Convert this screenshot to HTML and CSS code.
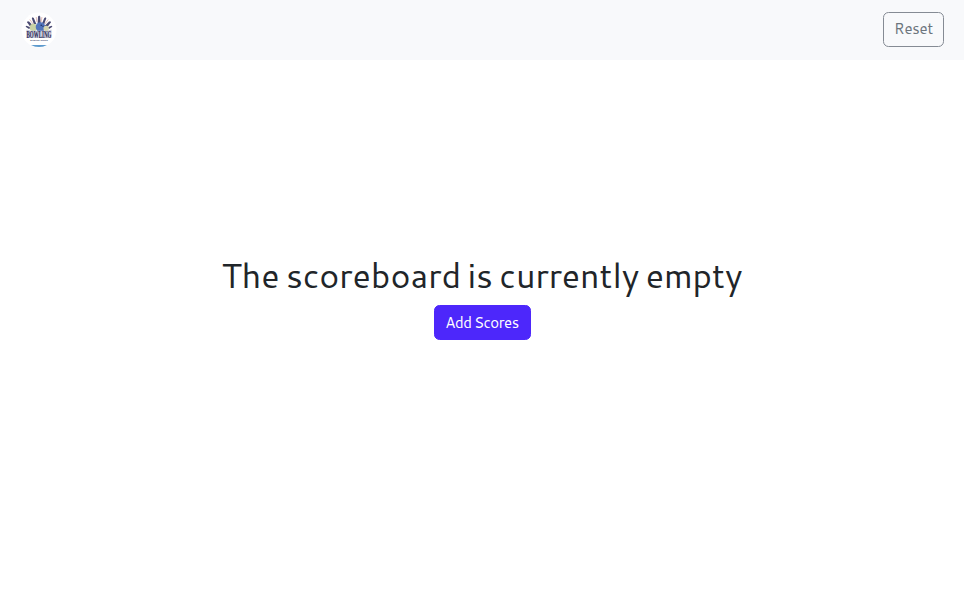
FILE: index.html
```
<!DOCTYPE html>
<html lang="en">
<head>
<meta charset="utf-8">
<title>Scoreboard</title>
<link rel="stylesheet" href="styles.css">
</head>
<body>
<header class="navbar">
  <svg class="logo" viewBox="0 0 36 36" role="img" aria-label="Bowling">
    <circle cx="18" cy="18" r="17.5" fill="#fff"/>
    <g fill="#4a4a72">
      <path d="M16.6 11 17 4.5 18.2 3.5 19.2 4.5 19.7 11z"/>
      <path d="M12.8 12 10.8 6.2 11.5 5.2 12.8 6 15.3 12z"/>
      <path d="M23.3 12 25.3 6.2 24.6 5.2 23.3 6 20.8 12z"/>
      <path d="M9.5 15 6.2 10.5 6.5 9.3 8 9.5 12.5 14z"/>
      <path d="M26.5 15 29.8 10.5 29.5 9.3 28 9.5 23.5 14z"/>
      <path d="M8 17 4.6 14.8 5.4 13.7 10 15.5zM28 17 31.4 14.8 30.6 13.7 26 15.5z"/>
    </g>
    <path d="m15.2 5 .7 5M20.9 5l-.7 5M8.8 7.5l3.5 4.8M27.2 7.5l-3.5 4.8" stroke="#d9a19c" stroke-width=".7"/>
    <circle cx="12.5" cy="15.5" r="3.8" fill="#cad3a5"/>
    <circle cx="19.5" cy="15" r="4.8" fill="#5375bc"/>
    <circle cx="25.2" cy="16.5" r="2.7" fill="#d4d5ae"/>
    <circle cx="20.2" cy="13.2" r=".7" fill="#17254f"/><circle cx="22" cy="14.2" r=".6" fill="#17254f"/>
    <path d="M5.5 17.5 10 18.8h16l4.5-1.3v8L26 26H10l-4.5-.5z" fill="#c9cbdc"/>
    <text class="logo-name" text-anchor="middle" transform="translate(18 25.6) scale(1 2.2)">BOWLING</text>
    <text class="logo-tag" text-anchor="middle" transform="translate(18 29) scale(1 1.2)">BOWLING STRIKE</text>
    <path d="M10 33.2h16Q18 36.4 10 33.2z" fill="#2779bc"/>
  </svg>
  <button class="btn btn-reset" type="button">Reset</button>
</header>
<main class="empty">
  <h1>The scoreboard is currently empty</h1>
  <button class="btn btn-add" type="button">Add Scores</button>
</main>
</body>
</html>
```
FILE: styles.css
```
* { box-sizing: border-box; }
body {
  margin: 0;
  height: 100vh;
  display: flex;
  flex-direction: column;
  background: #fff;
  color: #212529;
  font-family: Cantarell, "Noto Sans", sans-serif;
}
.navbar {
  height: 60px;
  padding: 0 20px 0 21px;
  display: flex;
  flex: none;
  align-items: center;
  justify-content: space-between;
  background: #f8f9fb;
}
.logo { width: 36px; height: 36px; display: block; overflow: visible; }
.logo-name { font: 700 5px "Liberation Serif", serif; fill: #292a55; }
.logo-tag { font: 700 2px "Liberation Sans", sans-serif; fill: #34426b; }
.btn {
  height: 35px;
  padding: 0;
  border: 1px solid;
  border-radius: 5.5px;
  font-family: inherit;
  font-size: 15px;
  line-height: 20px;
  letter-spacing: -0.45px;
  word-spacing: -1.2px;
  white-space: nowrap;
}
.btn-reset { width: 61px; margin-top: -2px; color: #6c757d; border-color: #858b94; background: transparent; letter-spacing: -0.2px; }
.btn-add { width: 97px; color: #fff; border-color: #4d27fb; background: #4d27fb; }
.empty {
  padding-top: 193px;
  display: flex;
  flex-direction: column;
  align-items: center;
}
h1 {
  margin: 0 0 8px;
  font-size: 34px;
  line-height: 44px;
  font-weight: 400;
  letter-spacing: -0.06px;
  word-spacing: -2.8px;
  white-space: nowrap;
}
```
